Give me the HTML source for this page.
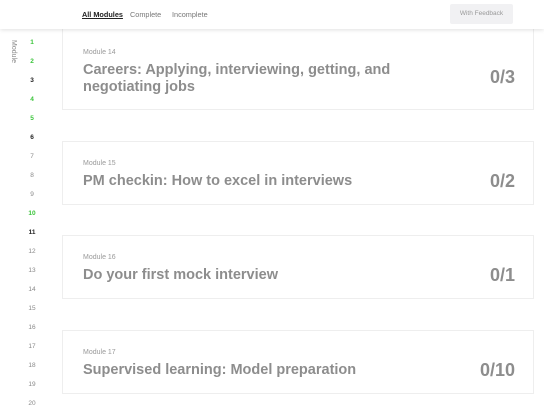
<!DOCTYPE html><html><head><style>
body{margin:0;width:544px;height:417px;background:#fff;font-family:"Liberation Sans",sans-serif;position:relative;overflow:hidden}
.hdr{position:absolute;left:0;top:0;width:544px;height:29px;background:#fff;box-shadow:0 1px 4px rgba(0,0,0,.12);z-index:2}
.tab{position:absolute;top:10px;font-size:7.3px;color:#777}
.btn{position:absolute;left:450px;top:4px;width:63px;height:20px;background:#f1f1f3;border-radius:2px;font-size:6.5px;color:#999;text-align:center;line-height:20px}
.vl{position:absolute;transform:rotate(90deg);transform-origin:left top;font-size:7px;color:#888;left:17px;top:40px}
.n{position:absolute;width:20px;left:22px;text-align:center;font-size:6.5px;color:#888}
.g{color:#3ac43a;font-weight:bold}.b{color:#222;font-weight:bold}
.card{position:absolute;left:62px;width:470px;border:1px solid #eee;background:#fff}
.m{position:absolute;left:20px;font-size:7px;color:#999}
.t{position:absolute;left:20px;font-size:14.5px;font-weight:bold;color:#8d8d8d;line-height:17px}
.c{position:absolute;right:18px;font-size:18px;font-weight:bold;color:#8d8d8d}
</style></head><body>
<div class="hdr">
<span class="tab" style="left:82px;color:#222;font-weight:bold;text-decoration:underline">All Modules</span>
<span class="tab" style="left:130px">Complete</span>
<span class="tab" style="left:172px">Incomplete</span>
<div class="btn">With Feedback</div>
</div>
<div class="vl">Module</div>
<div class="n g" style="top:39px">1</div><div class="n g" style="top:58px">2</div><div class="n b" style="top:77px">3</div>
<div class="n g" style="top:96px">4</div><div class="n g" style="top:115px">5</div><div class="n b" style="top:134px">6</div>
<div class="n" style="top:153px">7</div><div class="n" style="top:172px">8</div><div class="n" style="top:191px">9</div>
<div class="n g" style="top:210px">10</div><div class="n b" style="top:229px">11</div><div class="n" style="top:248px">12</div>
<div class="n" style="top:267px">13</div><div class="n" style="top:286px">14</div><div class="n" style="top:305px">15</div>
<div class="n" style="top:324px">16</div><div class="n" style="top:343px">17</div><div class="n" style="top:362px">18</div>
<div class="n" style="top:381px">19</div><div class="n" style="top:400px">20</div>
<div class="card" style="top:20px;height:88px"><span class="m" style="top:28px">Module 14</span><div class="t" style="top:41px">Careers: Applying, interviewing, getting, and<br>negotiating jobs</div><span class="c" style="top:46px">0/3</span></div>
<div class="card" style="top:141px;height:62px"><span class="m" style="top:18px">Module 15</span><div class="t" style="top:31px">PM checkin: How to excel in interviews</div><span class="c" style="top:29px">0/2</span></div>
<div class="card" style="top:235px;height:62px"><span class="m" style="top:18px">Module 16</span><div class="t" style="top:31px">Do your first mock interview</div><span class="c" style="top:29px">0/1</span></div>
<div class="card" style="top:330px;height:62px"><span class="m" style="top:18px">Module 17</span><div class="t" style="top:31px">Supervised learning: Model preparation</div><span class="c" style="top:29px">0/10</span></div>
</body></html>
